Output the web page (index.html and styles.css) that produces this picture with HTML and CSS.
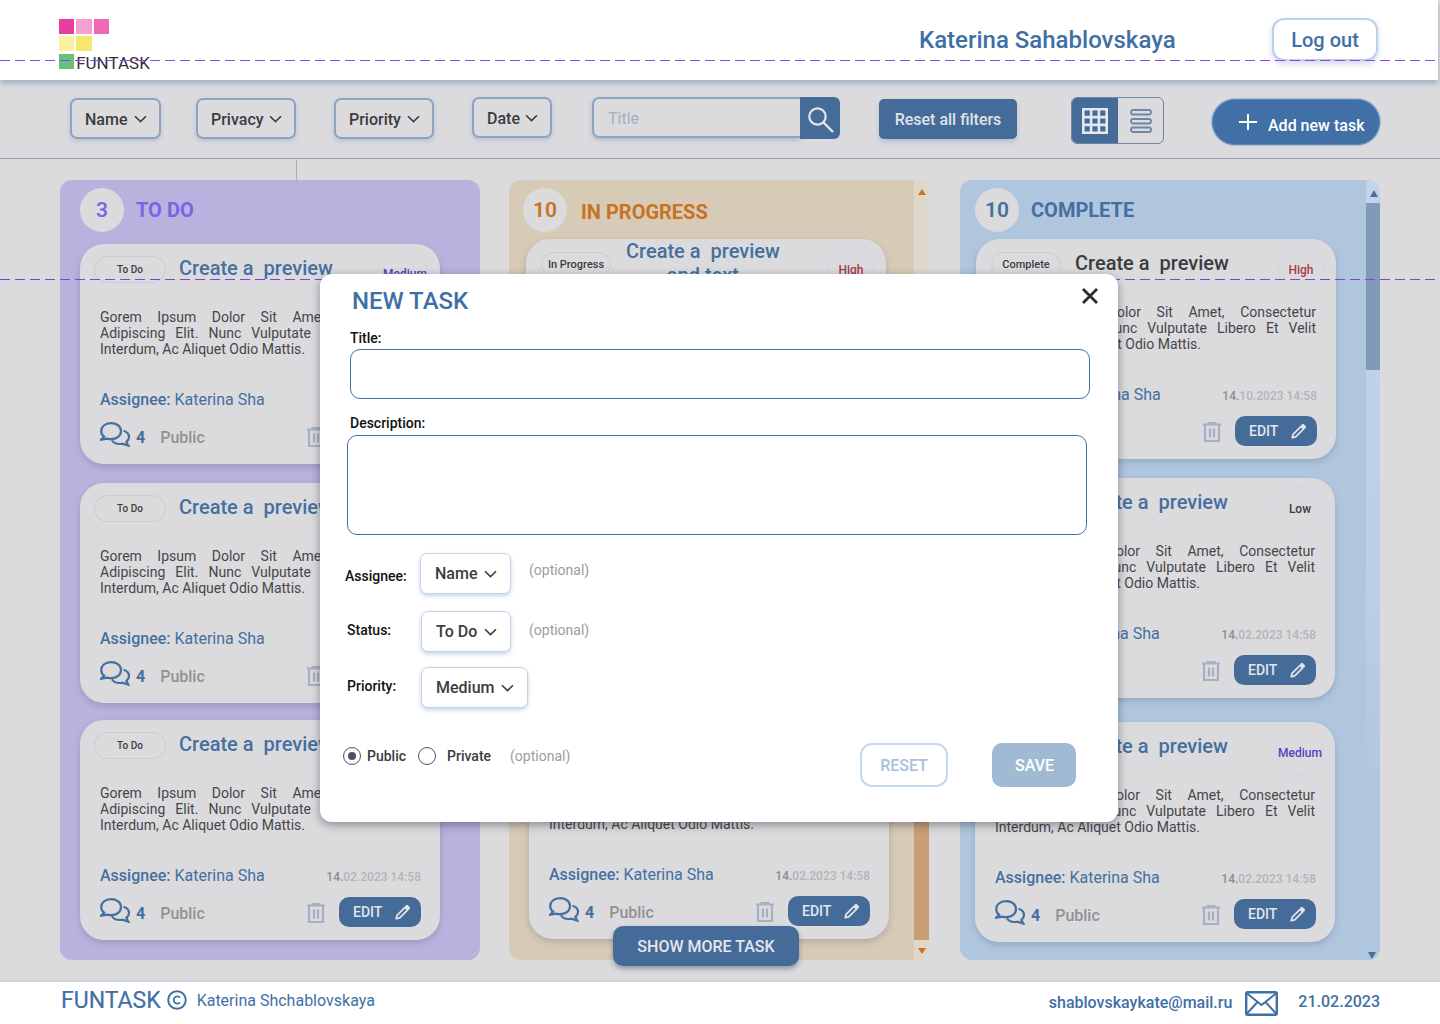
FILE: index.html
```html
<!DOCTYPE html>
<html lang="en">
<head>
<meta charset="utf-8">
<title>FUNTASK</title>
<link rel="stylesheet" href="styles.css">
</head>
<body>
<svg class="sprite" aria-hidden="true">
  <symbol id="i-chev" viewBox="0 0 13 8"><path d="M1 1.200 6.500 6.600 12 1.200" fill="none" stroke="currentColor" stroke-width="1.600"/></symbol>
  <symbol id="i-comments" viewBox="0 0 31 25"><path d="M11 1.200C5 1.200 1.200 4.700 1.200 9c0 2.400 1.100 4.300 2.900 5.700L1.200 17.600l6.100-1c1.200.4 2.400.6 3.700.6 5.900 0 10-3.600 10-8.200S16.900 1.200 11 1.200z" fill="none" stroke="currentColor" stroke-width="2.200"/><path d="M23.500 8.800c3.300 1 5.500 3.400 5.500 6.300 0 2-1 3.700-2.600 4.900l1.900 3.600-6-1.900c-.9.200-1.800.3-2.700.3-3.400 0-6.300-1.400-7.700-3.700" fill="none" stroke="currentColor" stroke-width="2.200"/></symbol>
  <symbol id="i-trash" viewBox="0 0 20 20"><path d="M1 2.500h18M6.500 2.500V.8h7v1.700" fill="none" stroke="currentColor" stroke-width="2"/><path d="M3 3v16h14V3M8 6.500v9M12 6.500v9" fill="none" stroke="currentColor" stroke-width="2.200"/></symbol>
  <symbol id="i-pencil" viewBox="0 0 16 16"><path d="M1.300 14.700 2.200 11 10.700 2.500l2.800 2.800L5 13.800zM12 1.200 13 .8l2.200 2.200-.4 1z" fill="none" stroke="currentColor" stroke-width="1.800" stroke-linejoin="round"/></symbol>
</svg>

<div class="page">
  <div class="guide guide-top"></div>
  <div class="guide guide-mid"></div>
  <div class="tick"></div>

  <header class="topbar">
    <div class="logo">
      <span class="sq sq1"></span><span class="sq sq2"></span><span class="sq sq3"></span>
      <span class="sq sq4"></span><span class="sq sq5"></span><span class="sq-empty"></span>
      <span class="sq sq6"></span><span class="logo-text">FUNTASK</span>
    </div>
    <div class="user">Katerina Sahablovskaya</div>
    <button class="logout">Log out</button>
  </header>

  <nav class="toolbar">
    <button class="filter f-name">Name <svg class="chev"><use href="#i-chev"/></svg></button>
    <button class="filter f-privacy">Privacy <svg class="chev"><use href="#i-chev"/></svg></button>
    <button class="filter f-priority">Priority <svg class="chev"><use href="#i-chev"/></svg></button>
    <button class="filter f-date">Date <svg class="chev"><use href="#i-chev"/></svg></button>
    <div class="search">
      <input class="search-input" type="text" placeholder="Title">
      <button class="search-btn" aria-label="Search">
        <svg width="26" height="26" viewBox="0 0 26 26"><circle cx="9.500" cy="9.500" r="8.200" fill="none" stroke="#e4e7ec" stroke-width="2.200"/><path d="M15.500 15.500 25 25" stroke="#e4e7ec" stroke-width="2.400"/></svg>
      </button>
    </div>
    <button class="reset-filters">Reset all filters</button>
    <div class="view-toggle">
      <span class="view view-on">
        <svg width="26" height="26" viewBox="0 0 26 26"><path fill="none" stroke="#e4e7ec" stroke-width="2.600" d="M1.300 1.300h23.400v23.400H1.300zM9.100 1.300v23.400M16.900 1.300v23.400M1.300 9.100h23.400M1.300 16.900h23.400"/></svg>
      </span>
      <span class="view">
        <svg width="22" height="24" viewBox="0 0 22 24"><g fill="none" stroke="#6f86a4" stroke-width="1.800"><rect x="1" y="1" width="20" height="4.500" rx="2"/><rect x="1" y="10" width="20" height="4.500" rx="2"/><rect x="1" y="18.500" width="20" height="4.500" rx="2"/></g></svg>
      </span>
    </div>
    <button class="add-task">
      <svg width="18" height="18" viewBox="0 0 18 18"><path d="M9 1v16M0 9h18" stroke="#fff" stroke-width="2"/></svg>
      <span>Add new task</span>
    </button>
  </nav>

  <main class="board">
    <section class="col col-todo">
      <div class="col-head"><span class="count">3</span><h2 class="col-title">TO DO</h2></div>
      <article class="card">
        <div class="card-head"><span class="pill">To Do</span><h3 class="card-title">Create a  preview</h3><span class="prio prio-med">Medium</span></div>
        <p class="desc">Gorem Ipsum Dolor Sit Amet, Consectetur Adipiscing Elit. Nunc Vulputate Libero Et Velit Interdum, Ac Aliquet Odio Mattis.</p>
        <div class="meta"><span class="assignee"><b>Assignee:</b> Katerina Sha</span><span class="date"><b>14.</b>02.2023 14:58</span></div>
        <div class="actions"><svg class="ic-com"><use href="#i-comments"/></svg><span class="num">4</span><span class="vis">Public</span><svg class="ic-trash"><use href="#i-trash"/></svg><button class="edit">EDIT<svg class="ic-pen"><use href="#i-pencil"/></svg></button></div>
      </article>
      <article class="card">
        <div class="card-head"><span class="pill">To Do</span><h3 class="card-title">Create a  preview</h3><span class="prio prio-low">Low</span></div>
        <p class="desc">Gorem Ipsum Dolor Sit Amet, Consectetur Adipiscing Elit. Nunc Vulputate Libero Et Velit Interdum, Ac Aliquet Odio Mattis.</p>
        <div class="meta"><span class="assignee"><b>Assignee:</b> Katerina Sha</span><span class="date"><b>14.</b>02.2023 14:58</span></div>
        <div class="actions"><svg class="ic-com"><use href="#i-comments"/></svg><span class="num">4</span><span class="vis">Public</span><svg class="ic-trash"><use href="#i-trash"/></svg><button class="edit">EDIT<svg class="ic-pen"><use href="#i-pencil"/></svg></button></div>
      </article>
      <article class="card">
        <div class="card-head"><span class="pill">To Do</span><h3 class="card-title">Create a  preview</h3><span class="prio prio-high">High</span></div>
        <p class="desc">Gorem Ipsum Dolor Sit Amet, Consectetur Adipiscing Elit. Nunc Vulputate Libero Et Velit Interdum, Ac Aliquet Odio Mattis.</p>
        <div class="meta"><span class="assignee"><b>Assignee:</b> Katerina Sha</span><span class="date"><b>14.</b>02.2023 14:58</span></div>
        <div class="actions"><svg class="ic-com"><use href="#i-comments"/></svg><span class="num">4</span><span class="vis">Public</span><svg class="ic-trash"><use href="#i-trash"/></svg><button class="edit">EDIT<svg class="ic-pen"><use href="#i-pencil"/></svg></button></div>
      </article>
    </section>

    <section class="col col-prog">
      <div class="col-head"><span class="count">10</span><h2 class="col-title">IN PROGRESS</h2></div>
      <article class="card">
        <div class="card-head"><span class="pill">In Progress</span><h3 class="card-title card-title-two">Create a  preview<br>and text</h3><span class="prio prio-high">High</span></div>
        <p class="desc">Gorem Ipsum Dolor Sit Amet, Consectetur Adipiscing Elit. Nunc Vulputate Libero Et Velit Interdum, Ac Aliquet Odio Mattis.</p>
        <div class="meta"><span class="assignee"><b>Assignee:</b> Katerina Sha</span><span class="date"><b>14.</b>02.2023 14:58</span></div>
        <div class="actions"><svg class="ic-com"><use href="#i-comments"/></svg><span class="num">4</span><span class="vis">Public</span><svg class="ic-trash"><use href="#i-trash"/></svg><button class="edit">EDIT<svg class="ic-pen"><use href="#i-pencil"/></svg></button></div>
      </article>
      <article class="card">
        <div class="card-head"><span class="pill">In Progress</span><h3 class="card-title">Create a  preview</h3><span class="prio prio-low">Low</span></div>
        <p class="desc">Gorem Ipsum Dolor Sit Amet, Consectetur Adipiscing Elit. Nunc Vulputate Libero Et Velit Interdum, Ac Aliquet Odio Mattis.</p>
        <div class="meta"><span class="assignee"><b>Assignee:</b> Katerina Sha</span><span class="date"><b>14.</b>02.2023 14:58</span></div>
        <div class="actions"><svg class="ic-com"><use href="#i-comments"/></svg><span class="num">4</span><span class="vis">Public</span><svg class="ic-trash"><use href="#i-trash"/></svg><button class="edit">EDIT<svg class="ic-pen"><use href="#i-pencil"/></svg></button></div>
      </article>
      <article class="card">
        <div class="card-head"><span class="pill">In Progress</span><h3 class="card-title">Create a  preview</h3><span class="prio prio-med">Medium</span></div>
        <p class="desc">Gorem Ipsum Dolor Sit Amet, Consectetur Adipiscing Elit. Nunc Vulputate Libero Et Velit Interdum, Ac Aliquet Odio Mattis.</p>
        <div class="meta"><span class="assignee"><b>Assignee:</b> Katerina Sha</span><span class="date"><b>14.</b>02.2023 14:58</span></div>
        <div class="actions"><svg class="ic-com"><use href="#i-comments"/></svg><span class="num">4</span><span class="vis">Public</span><svg class="ic-trash"><use href="#i-trash"/></svg><button class="edit">EDIT<svg class="ic-pen"><use href="#i-pencil"/></svg></button></div>
      </article>
      <div class="scroll"><span class="arrow arrow-up"></span><span class="thumb"></span><span class="arrow arrow-down"></span></div>
    </section>

    <section class="col col-done">
      <div class="col-head"><span class="count">10</span><h2 class="col-title">COMPLETE</h2></div>
      <article class="card">
        <div class="card-head"><span class="pill">Complete</span><h3 class="card-title card-title-dark">Create a  preview</h3><span class="prio prio-high">High</span></div>
        <p class="desc">Gorem Ipsum Dolor Sit Amet, Consectetur Adipiscing Elit. Nunc Vulputate Libero Et Velit Interdum, Ac Aliquet Odio Mattis.</p>
        <div class="meta"><span class="assignee"><b>Assignee:</b> Katerina Sha</span><span class="date"><b>14.</b>10.2023 14:58</span></div>
        <div class="actions"><svg class="ic-com"><use href="#i-comments"/></svg><span class="num">4</span><span class="vis">Public</span><svg class="ic-trash"><use href="#i-trash"/></svg><button class="edit">EDIT<svg class="ic-pen"><use href="#i-pencil"/></svg></button></div>
      </article>
      <article class="card">
        <div class="card-head"><span class="pill">Complete</span><h3 class="card-title">Create a  preview</h3><span class="prio prio-low">Low</span></div>
        <p class="desc">Gorem Ipsum Dolor Sit Amet, Consectetur Adipiscing Elit. Nunc Vulputate Libero Et Velit Interdum, Ac Aliquet Odio Mattis.</p>
        <div class="meta"><span class="assignee"><b>Assignee:</b> Katerina Sha</span><span class="date"><b>14.</b>02.2023 14:58</span></div>
        <div class="actions"><svg class="ic-com"><use href="#i-comments"/></svg><span class="num">4</span><span class="vis">Public</span><svg class="ic-trash"><use href="#i-trash"/></svg><button class="edit">EDIT<svg class="ic-pen"><use href="#i-pencil"/></svg></button></div>
      </article>
      <article class="card">
        <div class="card-head"><span class="pill">Complete</span><h3 class="card-title">Create a  preview</h3><span class="prio prio-med">Medium</span></div>
        <p class="desc">Gorem Ipsum Dolor Sit Amet, Consectetur Adipiscing Elit. Nunc Vulputate Libero Et Velit Interdum, Ac Aliquet Odio Mattis.</p>
        <div class="meta"><span class="assignee"><b>Assignee:</b> Katerina Sha</span><span class="date"><b>14.</b>02.2023 14:58</span></div>
        <div class="actions"><svg class="ic-com"><use href="#i-comments"/></svg><span class="num">4</span><span class="vis">Public</span><svg class="ic-trash"><use href="#i-trash"/></svg><button class="edit">EDIT<svg class="ic-pen"><use href="#i-pencil"/></svg></button></div>
      </article>
      <div class="scroll"><span class="arrow arrow-up"></span><span class="thumb"></span><span class="arrow arrow-down"></span></div>
    </section>
  </main>

  <button class="show-more">SHOW MORE TASK</button>

  <footer class="footer">
    <span class="foot-brand">FUNTASK</span>
    <svg class="foot-copy" viewBox="0 0 20 20"><circle cx="10" cy="10" r="8.800" fill="none" stroke="#3f70a5" stroke-width="2"/><path d="M13 7.600A3.600 3.600 0 1 0 13 12.400" fill="none" stroke="#3f70a5" stroke-width="1.800"/></svg>
    <span class="foot-name">Katerina Shchablovskaya</span>
    <a class="foot-mail">shablovskaykate@mail.ru</a>
    <svg class="foot-env" viewBox="0 0 33 25"><rect x="1.200" y="1.200" width="30.600" height="22.600" rx="1.500" fill="none" stroke="#3f70a5" stroke-width="2.400"/><path d="M2 2.500 16.500 14 31 2.500M2 22.500 12.500 11M31 22.500 20.500 11" fill="none" stroke="#3f70a5" stroke-width="2"/></svg>
    <span class="foot-date">21.02.2023</span>
  </footer>

  <div class="modal">
    <h1 class="modal-title">NEW TASK</h1>
    <button class="modal-close" aria-label="Close"><svg width="18" height="18" viewBox="0 0 18 18"><path d="M2 2 16 16M16 2 2 16" stroke="#2b2b2b" stroke-width="2.800"/></svg></button>
    <label class="lbl lbl-title">Title:</label>
    <input class="field field-title" type="text">
    <label class="lbl lbl-desc">Description:</label>
    <textarea class="field field-desc"></textarea>
    <div class="row row-assignee">
      <span class="row-lbl">Assignee:</span>
      <button class="select">Name <svg class="chev"><use href="#i-chev"/></svg></button>
      <span class="opt">(optional)</span>
    </div>
    <div class="row row-status">
      <span class="row-lbl">Status:</span>
      <button class="select">To Do <svg class="chev"><use href="#i-chev"/></svg></button>
      <span class="opt">(optional)</span>
    </div>
    <div class="row row-priority">
      <span class="row-lbl">Priority:</span>
      <button class="select">Medium <svg class="chev"><use href="#i-chev"/></svg></button>
    </div>
    <div class="modal-foot">
      <span class="radio radio-on"></span><span class="radio-lbl">Public</span>
      <span class="radio radio-second"></span><span class="radio-lbl radio-lbl-second">Private</span>
      <span class="opt opt-radio">(optional)</span>
      <button class="btn-reset">RESET</button>
      <button class="btn-save">SAVE</button>
    </div>
  </div>
</div>
</body>
</html>
```

FILE: styles.css
```css
* { box-sizing: border-box; }
html, body { margin: 0; padding: 0; }
body { background: #dbdbde; font-family: Roboto, "Noto Sans", sans-serif; color: #3c3c3e; overflow: hidden; }
button { font-family: inherit; cursor: pointer; }
h1, h2, h3, p { margin: 0; font-weight: 500; }
.sprite { position: absolute; width: 0; height: 0; }
.page { position: relative; width: 1440px; height: 1024px; display: flex; flex-direction: column; overflow: hidden; background: #dbdbde; }

/* guides */
.guide { position: absolute; left: 0; width: 1440px; height: 1px; background: repeating-linear-gradient(90deg, #8f3fff 0 10px, transparent 10px 15px); pointer-events: none; }
.guide-top { top: 60px; z-index: 5; }
.guide-mid { top: 279px; z-index: 3; background: repeating-linear-gradient(90deg, #8240e0 0 10px, transparent 10px 15px); }
.tick { position: absolute; left: 296px; top: 160px; width: 1px; height: 22px; background: #b0b0b4; z-index: 1; }

/* header */
.topbar { position: relative; z-index: 2; flex: none; width: 1438px; height: 80px; background: #fff; box-shadow: 0 3px 6px rgba(130,150,180,.7); display: flex; align-items: flex-start; padding-left: 59px; }
.logo { margin-top: 19px; width: 50px; display: grid; grid-template-columns: 15px 15.500px 15px; column-gap: 2.200px; row-gap: 2.300px; grid-template-rows: 15px 15.200px 15px; }
.sq { display: block; }
.sq1 { background: #e83e9f; }
.sq2 { background: #f3a0d3; }
.sq3 { background: #ee68b4; }
.sq4 { background: #faf0a0; }
.sq5 { background: #f8e76f; }
.sq6 { background: #67c178; }
.logo-text { grid-column: 2 / 4; font-size: 17px; line-height: 18px; margin-top: 0; white-space: nowrap; color: #333; }
.user { margin-left: 810px; margin-top: 25px; font-size: 24px; line-height: 30px; font-weight: 500; color: #3f70a5; white-space: nowrap; }
.logout { margin-left: auto; margin-right: 60px; margin-top: 18px; width: 106px; height: 43px; background: #fff; border: 2px solid #bcd0e6; border-radius: 12px; font-size: 20px; font-weight: 500; color: #3f70a5; box-shadow: 0 3px 6px rgba(160,185,215,.5); padding: 0; }

/* toolbar */
.toolbar { position: relative; flex: none; height: 79px; border-bottom: 1px solid #94a7c1; display: flex; align-items: flex-start; padding: 18px 0 0 70px; }
.filter { height: 41px; padding: 1px 12px 0 13px; background: transparent; border: 2px solid #8ba4c4; border-radius: 7px; font-size: 16px; font-weight: 500; color: #3c3c3e; display: flex; align-items: center; justify-content: space-between; box-shadow: 0 2px 4px rgba(130,150,180,.4); }
.chev { width: 13px; height: 8px; flex: none; }
.f-name { width: 91px; }
.f-privacy { width: 100px; margin-left: 35px; }
.f-priority { width: 100px; margin-left: 38px; }
.f-date { width: 80px; margin-left: 38px; margin-top: -1px; }
.search { display: flex; margin-left: 40px; margin-top: -1px; height: 42px; }
.search-input { width: 208px; height: 41px; background: transparent; border: 2px solid #8ba4c4; border-right: 0; border-radius: 7px 0 0 7px; padding: 1px 0 0 14px; font: 400 16px Roboto, sans-serif; color: #3c3c3e; box-shadow: 0 2px 4px rgba(130,150,180,.5); outline: none; }
.search-input::placeholder { color: #a3afc1; opacity: 1; }
.search-btn { width: 40px; height: 42px; background: #456b99; border: 0; border-radius: 0 6px 6px 0; padding: 4px 0 0 2px; display: flex; align-items: center; justify-content: center; }
.reset-filters { margin-left: 39px; margin-top: 1px; width: 138px; height: 40px; background: #456b99; border: 0; border-radius: 5px; color: #dfe3ea; font-size: 16px; font-weight: 500; padding: 0; box-shadow: 0 3px 5px rgba(130,150,180,.4); }
.view-toggle { margin-left: 54px; margin-top: -1px; width: 93px; height: 47px; display: flex; border: 1px solid #6f86a4; border-radius: 6px; overflow: hidden; }
.view { flex: 1; display: flex; align-items: center; justify-content: center; }
.view-on { flex: none; width: 47px; margin: -1px 0 -1px -1px; background: #456b99; }
.add-task { margin-left: 48px; margin-top: 1px; width: 168px; height: 46px; border: 1px solid #5c87b8; border-radius: 23px; background: #4070a5; box-shadow: 0 0 2px #4070a5; color: #fff; font-size: 16px; font-weight: 500; display: flex; align-items: center; padding: 7px 0 0 26px; gap: 11px; }
.add-task svg { margin-top: -7px; }

/* board */
.board { flex: 1; display: flex; padding: 21px 60px 20px; min-height: 0; }
.col { position: relative; flex: none; width: 420px; height: 780px; border-radius: 12px; overflow: hidden; }
.col-todo { background: #b8b2de; --accent: #7b63e6; }
.col-prog { background: #d7cab6; --accent: #c8731f; margin-left: 29px; }
.col-done { background: #b0c6df; --accent: #456f9f; margin-left: 31px; }
.col-head { display: flex; align-items: center; height: 44px; margin: 8px 0 0 20px; gap: 12px; }
.count { width: 44px; height: 44px; flex: none; border-radius: 50%; background: #dbdbde; color: var(--accent); font-size: 21px; font-weight: 600; display: flex; align-items: center; justify-content: center; }
.col-title { font-size: 20px; font-weight: 700; line-height: 24px; color: var(--accent); letter-spacing: 0; }
.col-prog .col-head { margin-left: 14px; gap: 14px; }
.col-prog .col-title { margin-top: 4px; }
.col-done .col-head { margin-left: 15px; }

/* cards */
.card { width: 360px; height: 220px; margin-left: 20px; background: #dbdbde; border-radius: 24px; box-shadow: 0 3px 6px rgba(70,80,110,.25); position: relative; }
.col-todo .card:nth-child(2) { margin-top: 12px; }
.col-todo .card:nth-child(3) { margin-top: 19px; }
.col-todo .card:nth-child(4) { margin-top: 17px; }
.col-prog .card:nth-child(2) { margin-top: 7px; margin-left: 17px; }
.col-prog .card:nth-child(3) { margin-top: 20px; }
.col-prog .card:nth-child(4) { margin-top: 20px; }
.col-done .card { margin-left: 15px; }
.col-done .card:nth-child(2) { margin-top: 7px; margin-left: 16px; }
.col-done .card:nth-child(3) { margin-top: 19px; }
.col-done .card:nth-child(4) { margin-top: 24px; }
.card-head { height: 65px; display: flex; align-items: flex-start; padding: 0 12px 0 14px; }
.pill { flex: none; width: 72px; height: 27px; margin-top: 12px; border: 1px solid #cbcbcf; border-radius: 14px; font-size: 10px; font-weight: 500; display: flex; align-items: center; justify-content: center; color: #3c3c3e; }
.col-prog .pill, .col-done .pill { width: 70px; height: 25px; margin: 13px 0 0 1px; font-size: 11px; }
.card-title { margin: 10px 0 0 13px; font-size: 20px; line-height: 28px; font-weight: 500; color: #456f9f; white-space: pre; }
.col-prog .card-title { margin-left: 15px; margin-top: 10px; }
.col-done .card-title { margin-left: 14px; margin-top: 10px; }
.col-prog .card-title-two { margin-top: 0; line-height: 24px; text-align: center; }
.card-title-dark { color: #3c3c3e; }
.prio { flex: none; margin: 7px 0 0 auto; width: 46px; height: 46px; border-radius: 50%; border: 1px solid #d2d6e0; font-size: 12px; font-weight: 500; display: flex; align-items: center; justify-content: center; }
.col-done .prio, .col-prog .prio { margin-top: 8px; }
.prio-high { color: #a83a4a; }
.prio-med { color: #5a3fc0; }
.prio-low { color: #3c3c3e; }
.desc { margin: 0 20px; font-size: 14px; line-height: 16px; font-weight: 400; text-align: justify; color: #46464a; height: 48px; }
.meta { margin: 32px 19px 0 20px; height: 20px; display: flex; align-items: center; justify-content: space-between; }
.assignee { font-size: 16px; color: #456f9f; }
.assignee b { font-weight: 500; }
.date { font-size: 12px; font-weight: 500; color: #b4b4b8; margin-top: 3px; }
.date b { font-weight: 500; color: #8d8d90; }
.actions { margin: 12px 19px 0 20px; height: 30px; display: flex; align-items: center; }
.ic-com { width: 31px; height: 25px; color: #456f9f; flex: none; margin-top: -3px; }
.num { margin-left: 5px; font-size: 16px; font-weight: 700; color: #456f9f; margin-top: 2px; }
.vis { margin-left: 15px; font-size: 16px; font-weight: 500; color: #919194; margin-top: 2px; }
.ic-trash { width: 20px; height: 20px; margin-left: auto; color: #a5b1c3; flex: none; margin-top: 2px; }
.edit { margin-left: 13px; width: 82px; height: 30px; background: #456b99; border: 0; border-radius: 10px; color: #e3e6ec; font-size: 14px; font-weight: 500; display: flex; align-items: center; justify-content: space-between; padding: 0 11px 0 14px; }
.ic-pen { width: 15px; height: 15px; color: #e3e6ec; }

/* scrollbars */
.scroll { position: absolute; right: 0; top: 0; width: 14px; height: 100%; }
.col-prog .scroll { width: 15px; background: #e0d7cb; }
.col-done .scroll { background: linear-gradient(#c3d4e8, #bccfe5 400px, #b0c6df 620px); }
.thumb { position: absolute; left: 0; right: 0; }
.col-prog .thumb { top: 320px; bottom: 20px; background: #c89f75; }
.col-done .thumb { top: 23px; height: 167px; background: #819ab9; }
.arrow { position: absolute; left: 50%; margin-left: -4px; width: 0; height: 0; border-left: 4px solid transparent; border-right: 4px solid transparent; }
.arrow-up { top: 9px; border-bottom: 6px solid var(--accent); }
.arrow-down { bottom: 1px; border-top: 7px solid var(--accent); }
.col-prog .arrow-down { bottom: 6px; border-top-width: 6px; }
.col-done .arrow-up { margin-left: -3px; top: 10px; border-bottom-width: 7px; }
.col-done .arrow-down { margin-left: -5px; }

/* show more */
.show-more { position: absolute; left: 613px; top: 926px; width: 186px; height: 40px; background: #456b99; border: 0; border-radius: 10px; color: #e3e6ec; font-size: 16px; font-weight: 500; padding: 0; box-shadow: 0 3px 5px rgba(60,70,90,.45); z-index: 2; }

/* footer */
.footer { flex: none; height: 44px; background: #fff; border-top: 2px solid #d0d3da; display: flex; align-items: center; padding: 0 60px 4px 61px; }
.foot-brand { font-size: 23px; line-height: 30px; color: #3f70a5; -webkit-text-stroke: .2px #3f70a5; }
.foot-copy { width: 20px; height: 20px; margin-left: 6px; margin-top: -2px; }
.foot-name { margin-left: 10px; font-size: 16px; color: #3f70a5; margin-top: -2px; }
.foot-mail { margin-left: auto; font-size: 16px; font-weight: 500; color: #3f70a5; margin-top: 2px; }
.foot-env { width: 33px; height: 25px; margin-left: 13px; margin-top: 5px; }
.foot-date { margin-left: 20px; font-size: 16px; font-weight: 500; color: #3f70a5; }

/* modal */
.modal { position: absolute; left: 320px; top: 274px; width: 798px; height: 548px; background: #fff; border-radius: 12px; box-shadow: 0 3px 10px rgba(40,40,50,.45); z-index: 4; }
.modal-title { margin: 0; padding: 13px 0 0 32px; font-size: 24px; line-height: 28px; font-weight: 500; color: #3f70a5; }
.modal-close { position: absolute; left: 761px; top: 13px; width: 18px; height: 18px; padding: 0; border: 0; background: none; }
.lbl { display: block; margin-left: 30px; font-size: 14px; line-height: 16px; font-weight: 500; color: #111; }
.lbl-title { margin-top: 15px; }
.lbl-desc { margin-top: 16px; }
.field { display: block; border: 1px solid #3f70a5; border-radius: 10px; background: #fff; outline: none; resize: none; padding: 0; }
.field-title { margin: 3px 0 0 30px; width: 740px; height: 50px; }
.field-desc { margin: 4px 0 0 27px; width: 740px; height: 100px; }
.row { display: flex; align-items: flex-start; height: 41px; }
.row-lbl { font-size: 14px; line-height: 16px; font-weight: 500; color: #111; }
.row-assignee { margin: 18px 0 0 25px; }
.row-assignee .row-lbl { width: 75px; margin-top: 15px; }
.row-status { margin: 17px 0 0 27px; }
.row-status .row-lbl { width: 74px; margin-top: 11px; }
.row-priority { margin: 15px 0 0 27px; }
.row-priority .row-lbl { width: 74px; margin-top: 11px; }
.select { height: 41px; background: #fff; border: 1.500px solid #c3d4e8; border-radius: 7px; box-shadow: 0 2px 4px rgba(150,175,210,.55); font-size: 16px; font-weight: 500; color: #3c3c3e; display: flex; align-items: center; justify-content: space-between; padding: 0 13px 0 14px; }
.row-assignee .select { width: 91px; }
.row-status .select { width: 90px; }
.row-priority .select { width: 107px; }
.opt { margin-left: 18px; font-size: 14px; line-height: 16px; color: #9c9c9c; }
.row-assignee .opt { margin-top: 9px; }
.row-status .opt { margin-top: 11px; }
.modal-foot { margin: 35px 42px 0 23px; height: 44px; display: flex; align-items: flex-start; }
.radio { flex: none; width: 18px; height: 18px; margin-top: 4px; border: 1.200px solid #4d5068; border-radius: 50%; position: relative; background: #fff; }
.radio-on::after { content: ""; position: absolute; left: 3.800px; top: 3.800px; width: 8px; height: 8px; border-radius: 50%; background: #4d5068; }
.radio-second { margin-left: 12px; }
.radio-lbl { margin: 5px 0 0 6px; font-size: 14px; line-height: 16px; font-weight: 500; color: #3c3c3e; }
.radio-lbl-second { margin-left: 11px; }
.opt-radio { margin: 5px 0 0 19px; }
.btn-reset { margin-left: auto; width: 88px; height: 44px; border: 2px solid #c6d8ea; border-radius: 12px; background: #fff; color: #a8c0da; font-size: 16px; font-weight: 500; padding: 0; }
.btn-save { margin-left: 44px; width: 84px; height: 44px; border: 0; border-radius: 10px; background: #a1bad4; color: #fff; font-size: 16px; font-weight: 500; padding: 0 0 0 1px; }
```
